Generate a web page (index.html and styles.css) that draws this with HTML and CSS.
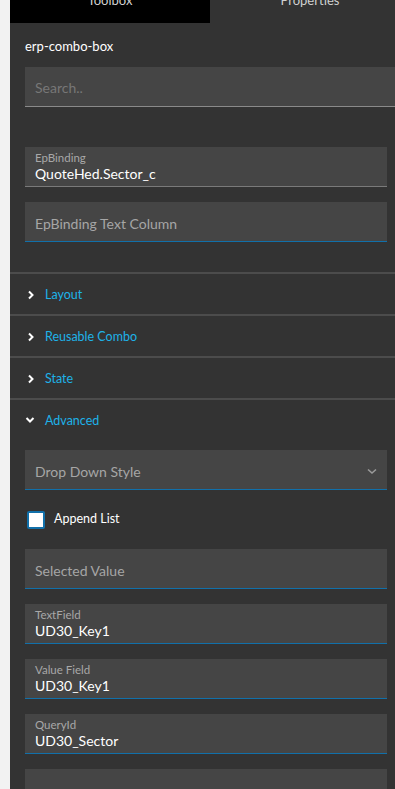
FILE: index.html
```html
<!DOCTYPE html>
<html>
<head>
<meta charset="utf-8">
<link rel="stylesheet" href="styles.css">
</head>
<body>
<div class="page">
  <div class="gutter"></div>
  <div class="panel">
    <div class="tabs">
      <div class="tab tab-dark"><span class="tab-label">Toolbox</span></div>
      <div class="tab tab-active"><span class="tab-label">Properties</span></div>
    </div>
    <div class="content">
      <div class="title">erp-combo-box</div>
      <div class="field search"><span class="search-ph">Search..</span></div>

      <div class="field labeled gray-line">
        <div class="f-label">EpBinding</div>
        <div class="f-value">QuoteHed.Sector_c</div>
      </div>
      <div class="field placeholder blue-line">EpBinding Text Column</div>
    </div>

    <div class="sections">
      <div class="section"><svg class="chev" width="8" height="10" viewBox="0 0 8 10"><path d="M2 1.5 L5.5 5 L2 8.5" fill="none" stroke="#fff" stroke-width="2"/></svg><span>Layout</span></div>
      <div class="section"><svg class="chev" width="8" height="10" viewBox="0 0 8 10"><path d="M2 1.5 L5.5 5 L2 8.5" fill="none" stroke="#fff" stroke-width="2"/></svg><span>Reusable Combo</span></div>
      <div class="section"><svg class="chev" width="8" height="10" viewBox="0 0 8 10"><path d="M2 1.5 L5.5 5 L2 8.5" fill="none" stroke="#fff" stroke-width="2"/></svg><span>State</span></div>
      <div class="section open"><svg class="chev-down" width="10" height="8" viewBox="0 0 10 8"><path d="M1.5 2 L5 5.5 L8.5 2" fill="none" stroke="#fff" stroke-width="2"/></svg><span>Advanced</span></div>
    </div>

    <div class="content adv">
      <div class="field placeholder blue-line dropdown">
        <span>Drop Down Style</span>
        <svg width="10" height="7" viewBox="0 0 10 7"><path d="M1 1.5 L5 5 L9 1.5" fill="none" stroke="#9a9a9a" stroke-width="1.6"/></svg>
      </div>
      <div class="check-row">
        <span class="checkbox"></span>
        <span class="check-label">Append List</span>
      </div>
      <div class="field placeholder blue-line">Selected Value</div>
      <div class="field labeled blue-line">
        <div class="f-label">TextField</div>
        <div class="f-value">UD30_Key1</div>
      </div>
      <div class="field labeled blue-line">
        <div class="f-label">Value Field</div>
        <div class="f-value">UD30_Key1</div>
      </div>
      <div class="field labeled blue-line">
        <div class="f-label">QueryId</div>
        <div class="f-value">UD30_Sector</div>
      </div>
      <div class="field blue-line"></div>
    </div>
  </div>
</div>
</body>
</html>
```
FILE: styles.css
```css
html, body {
  margin: 0;
  padding: 0;
  height: 100%;
  overflow: hidden;
  background: #f2f2f2;
}
.page {
  display: flex;
  height: 789px;
  font-family: "Lato", "Liberation Sans", sans-serif;
}
.gutter {
  width: 10px;
  flex: none;
  background: #f2f2f2;
}
.panel {
  flex: 1;
  background: #333333;
  overflow: hidden;
}
.tabs {
  display: flex;
  height: 23px;
  width: 400px;
}
.tab {
  width: 200px;
  flex: none;
  display: flex;
  justify-content: center;
  overflow: hidden;
}
.tab-dark { background: #000; }
.tab-active { background: #333; }
.tab-label {
  color: #d0d0d0;
  font-size: 13px;
  line-height: 14px;
  margin-top: -7px;
  height: 14px;
}
.content {
  padding: 0 8px 0 15px;
  display: flex;
  flex-direction: column;
}
.title {
  color: #fff;
  font-size: 13px;
  line-height: 18px;
  margin-top: 14px;
  margin-bottom: 12px;
}
.field {
  height: 40px;
  box-sizing: border-box;
  background: #454545;
  padding-left: 10px;
  margin-bottom: 15px;
}
.search {
  margin-right: -16px;
  border-bottom: 1px solid #8a8a8a;
  margin-bottom: 40px;
  display: flex;
  align-items: center;
}
.search-ph {
  color: #777;
  font-size: 14px;
  padding-top: 2px;
}
.gray-line { border-bottom: 1px solid #7a7a7a; }
.blue-line { border-bottom: 1px solid #1170aa; }
.labeled {
  padding-top: 4px;
}
.f-label {
  color: #a8a8a8;
  font-size: 11.5px;
  line-height: 14px;
}
.f-value {
  color: #fff;
  font-size: 14px;
  line-height: 18px;
}
.placeholder {
  color: #a6a6a6;
  font-size: 14px;
  line-height: 20px;
  padding-top: 12px;
}
.content > .placeholder:last-child { margin-bottom: 30px; }
.sections {
  display: flex;
  flex-direction: column;
}
.section {
  border-top: 2px solid #4c4c4c;
  height: 40px;
  display: flex;
  align-items: center;
  padding-left: 17px;
  color: #1eb2e8;
  font-size: 12.5px;
}
.section .chev { margin-right: 10px; margin-top: 1px; }
.section .chev-down { margin-left: -2px; margin-right: 10px; }
.adv { margin-top: 10px; }
.dropdown {
  display: flex;
  justify-content: space-between;
  padding-right: 10px;
}
.dropdown svg { margin-top: 6px; }
.check-row {
  display: flex;
  align-items: center;
  height: 18px;
  margin-top: 6px;
  margin-bottom: 20px;
  padding-left: 2px;
}
.checkbox {
  width: 18px;
  height: 18px;
  box-sizing: border-box;
  border: 2px solid #1170aa;
  background: #fff;
  border-radius: 2px;
}
.check-label {
  color: #fff;
  font-size: 12.5px;
  margin-left: 9px;
  margin-top: -4px;
}
```
